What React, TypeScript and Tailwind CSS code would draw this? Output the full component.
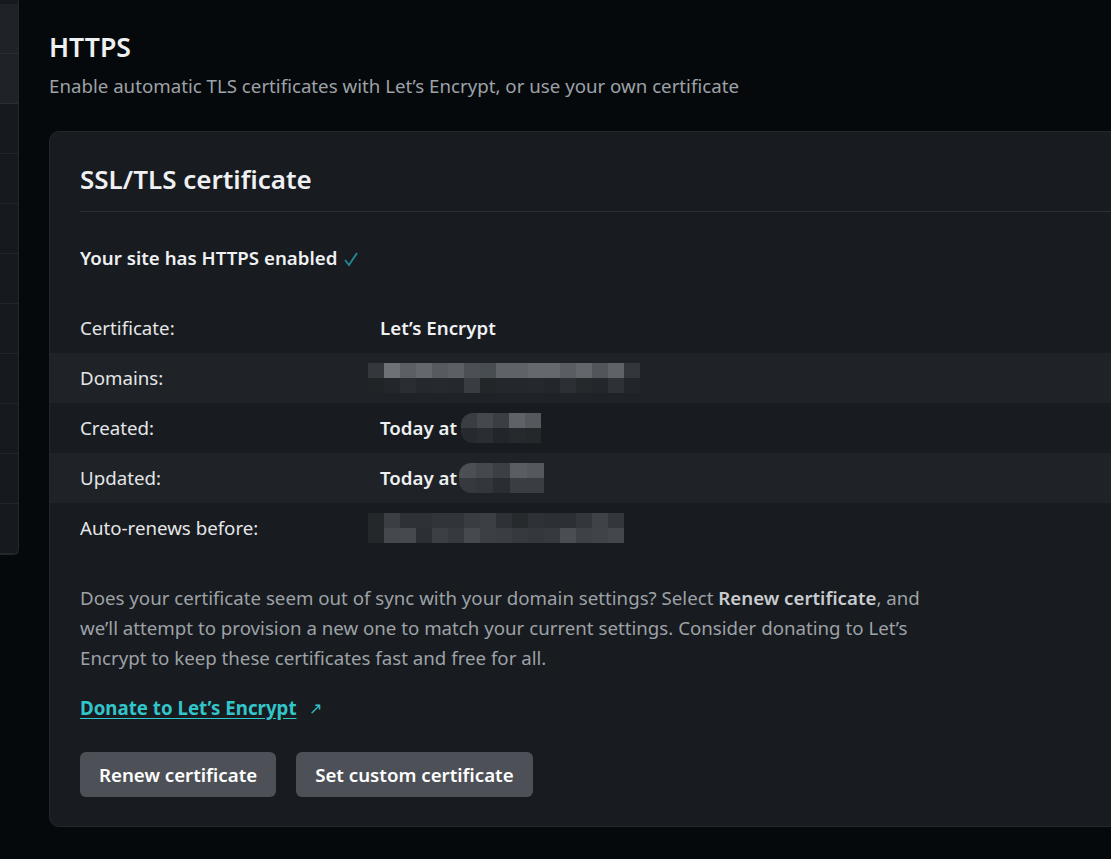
import React from 'react';

// pixelated redaction blocks, drawn as a small mosaic picture
type MosaicProps = { cols: number; cell: number; rows: string[][]; className?: string };

function Mosaic({ cols, cell, rows, className }: MosaicProps) {
  const h = 15;
  return (
    <svg width={cols * cell} height={rows.length * h} className={className}>
      {rows.map((row, r) =>
        row.map((c, i) => (
          <rect key={`${r}-${i}`} x={i * cell} y={r * h} width={cell} height={h} fill={c} />
        ))
      )}
    </svg>
  );
}

const domainRows = [
  ['#34383d', '#6e7276', '#5c6064', '#64686c', '#575b5f', '#5c6064', '#4c5055', '#484d51', '#5f6367', '#5f6367', '#65696d', '#65696d', '#5a5e63', '#63676b', '#52565b', '#5f6367', '#33373b'],
  ['#202427', '#23272b', '#2a2d31', '#25282c', '#26292d', '#25282c', '#393d41', '#222629', '#24272b', '#24272b', '#25292d', '#23272b', '#2c3034', '#25292c', '#23272b', '#2e3135', '#22262a'],
];

const createdRows = [
  ['#3a3e42', '#45494d', '#3b3f43', '#5f6367', '#55595d'],
  ['#26292d', '#2a2e32', '#22262a', '#26292d', '#24282b'],
];

const updatedRows = [
  ['#4c5054', '#45494d', '#3c4044', '#5a5e62', '#55595d'],
  ['#36393d', '#33373b', '#2a2e32', '#3a3e42', '#3a3e42'],
];

const renewRows = [
  ['#24282b', '#3b3f43', '#2e3135', '#2e3236', '#313438', '#313539', '#393d41', '#3c4044', '#2e3236', '#262a2d', '#2e3236', '#2c3034', '#2c3034', '#33373b', '#3f4347', '#33373b'],
  ['#24282b', '#45494d', '#46494d', '#2c3034', '#3c4044', '#36393d', '#464a4e', '#3c4044', '#3a3e42', '#36393d', '#34383c', '#36393d', '#4a4e52', '#3e4246', '#404448', '#44484c'],
];

function Row({ label, striped, children }: { label: string; striped?: boolean; children: React.ReactNode }) {
  return (
    <div className={`flex items-center h-[50px] px-[30px] ${striped ? 'bg-[#1f2226]' : ''}`}>
      <div className="w-[300px] text-[#e4e6e8]">{label}</div>
      <div className="flex items-center font-semibold text-[#eef0f2]">{children}</div>
    </div>
  );
}

export default function App() {
  return (
    <div
      className="w-[1111px] h-[859px] bg-[#06090c] flex overflow-hidden text-[18.7px]"
      style={{ fontFamily: '"Noto Sans", "Open Sans", sans-serif' }}
    >
      {/* sidebar edge */}
      <div className="w-[19px] h-[555px] shrink-0 bg-[#16191d] border-r border-b border-[#24272b] rounded-br-md flex flex-col pt-[4px]">
        <div className="h-[50px] bg-[#1f2226] border-b border-[#2a2d31]" />
        <div className="h-[50px] bg-[#1f2226] border-b border-[#2a2d31]" />
        {[0, 1, 2, 3, 4, 5, 6, 7, 8].map((i) => (
          <div key={i} className="h-[50px] border-b border-[#22252a]" />
        ))}
      </div>

      <main className="pl-[30px] pt-[27px] shrink-0">
        <h1 className="text-[26.6px] font-semibold text-[#eef0f2] leading-[40px]">HTTPS</h1>
        <p className="text-[#9da2a7] leading-[30px] mt-[4px]">
          Enable automatic TLS certificates with Let’s Encrypt, or use your own certificate
        </p>

        <section className="mt-[30px] w-[1120px] bg-[#181b1f] border border-[#24272b] rounded-[10px] pb-[29px]">
          <div className="px-[30px] pt-[27px]">
            <h2 className="text-[26px] font-semibold text-[#eef0f2] leading-[40px] pb-[12px] border-b border-[#2c2f33]">
              SSL/TLS certificate
            </h2>
            <p className="mt-[31px] font-semibold text-[#eef0f2] flex items-center gap-[6px] leading-[30px]">
              Your site has HTTPS enabled
              <svg width="16" height="16" viewBox="0 0 16 16" className="mt-[2px]">
                <polyline points="2,9 6,14 14,2" fill="none" stroke="#1f8b9b" strokeWidth="1.8" />
              </svg>
            </p>
          </div>

          <div className="mt-[30px]">
            <Row label="Certificate:">Let’s Encrypt</Row>
            <Row label="Domains:" striped>
              <Mosaic cols={17} cell={16} rows={domainRows} className="-ml-[12px]" />
            </Row>
            <Row label="Created:">
              Today at
              <Mosaic cols={5} cell={16} rows={createdRows} className="ml-[4px] rounded-l-[12px]" />
            </Row>
            <Row label="Updated:" striped>
              Today at
              <Mosaic cols={5} cell={17} rows={updatedRows} className="ml-[2px] rounded-l-[12px]" />
            </Row>
            <Row label="Auto-renews before:">
              <Mosaic cols={16} cell={16} rows={renewRows} className="-ml-[12px]" />
            </Row>
          </div>

          <div className="px-[30px] mt-[30px]">
            <p className="max-w-[860px] text-[#9da2a7] leading-[30px]">
              Does your certificate seem out of sync with your domain settings? Select{' '}
              <span className="font-semibold text-[#c9ccd0]">Renew certificate</span>, and we’ll attempt to
              provision a new one to match your current settings. Consider donating to Let’s Encrypt to keep these
              certificates fast and free for all.
            </p>

            <div className="mt-[20px] flex items-center gap-[12px] leading-[30px]">
              <a href="#" className="font-bold text-[#32c5c9] underline underline-offset-[3px]">
                Donate to Let’s Encrypt
              </a>
              <span className="text-[#32c5c9] text-[16px]">↗</span>
            </div>

            <div className="mt-[29px] flex gap-[20px]">
              <button className="h-[45px] px-[19px] pt-[2px] rounded-[6px] bg-[#4d5157] text-white font-semibold">
                Renew certificate
              </button>
              <button className="h-[45px] px-[19px] pt-[2px] rounded-[6px] bg-[#4d5157] text-white font-semibold">
                Set custom certificate
              </button>
            </div>
          </div>
        </section>
      </main>
    </div>
  );
}
